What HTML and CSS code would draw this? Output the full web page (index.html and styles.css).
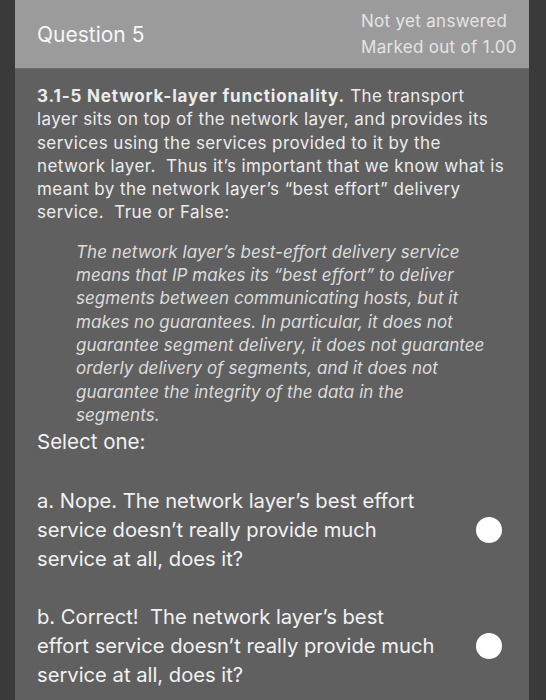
FILE: index.html
```html
<!DOCTYPE html>
<html lang="en">
<head>
<meta charset="utf-8">
<link rel="stylesheet" href="styles.css">
</head>
<body>
<div class="card">
  <div class="head">
    <div class="title">Question 5</div>
    <div class="state">
      <div>Not yet answered</div>
      <div>Marked out of 1.00</div>
    </div>
  </div>
  <div class="content">
    <div class="qtext"><b>3.1-5 Network-layer functionality.</b> The transport layer sits on top of the network layer, and provides its services using the services provided to it by the network layer.&nbsp; Thus it’s important that we know what is meant by the network layer’s “best effort” delivery service.&nbsp; True or False:</div>
    <div class="quote">The network layer’s best-effort delivery service means that IP makes its “best effort” to deliver segments between communicating hosts, but it makes no guarantees. In particular, it does not guarantee segment delivery, it does not guarantee orderly delivery of segments, and it does not guarantee the integrity of the data in the segments.</div>
    <div class="prompt">Select one:</div>
    <div class="options">
      <div class="option">
        <div class="otext">a. Nope. The network layer’s best effort service doesn’t really provide much service at all, does it?</div>
        <span class="radio"></span>
      </div>
      <div class="option">
        <div class="otext">b. Correct!&nbsp; The network layer’s best effort service doesn’t really provide much service at all, does it?</div>
        <span class="radio"></span>
      </div>
    </div>
  </div>
</div>
</body>
</html>
```
FILE: styles.css
```css
html, body {
  margin: 0;
  padding: 0;
}
body {
  background: #3a3a3a;
  font-family: Inter, "Noto Sans", "Liberation Sans", sans-serif;
  height: 700px;
  overflow: hidden;
}
.card {
  margin-left: 15px;
  width: 514px;
  height: 700px;
  background: #606060;
}
.head {
  height: 68px;
  background: #9b9b9b;
  display: flex;
  justify-content: space-between;
  box-shadow: 0 1px 0 #6c6c6c;
}
.title {
  align-self: center;
  padding-left: 22px;
  padding-top: 1px;
  font-size: 21px;
  color: #f7f7f7;
}
.state {
  padding-top: 8px;
  width: 168px;
  font-size: 17px;
  letter-spacing: 0.3px;
  line-height: 26px;
  color: #e4e4e4;
}
.content {
  padding: 17px 20px 0 22px;
}
.qtext {
  width: 470px;
  font-size: 17px;
  letter-spacing: 0.4px;
  line-height: 23.3px;
  color: #ececec;
}
.qtext b {
  font-weight: 700;
  letter-spacing: 0.85px;
}
.quote {
  margin: 16px 0 0 39px;
  width: 411px;
  font-style: italic;
  font-size: 17px;
  letter-spacing: 0.05px;
  line-height: 23.3px;
  color: #dcdcdc;
}
.prompt {
  margin-top: 2px;
  font-size: 20.5px;
  line-height: 26px;
  color: #f2f2f2;
}
.options {
  margin-top: 31px;
  display: flex;
  flex-direction: column;
  gap: 29px;
}
.option {
  display: flex;
  align-items: center;
  justify-content: space-between;
  width: 465px;
}
.otext {
  width: 404px;
  font-size: 20.2px;
  line-height: 29px;
  color: #f2f2f2;
}
.radio {
  width: 26px;
  height: 26px;
  border-radius: 50%;
  background: #ffffff;
  flex: none;
}
```
